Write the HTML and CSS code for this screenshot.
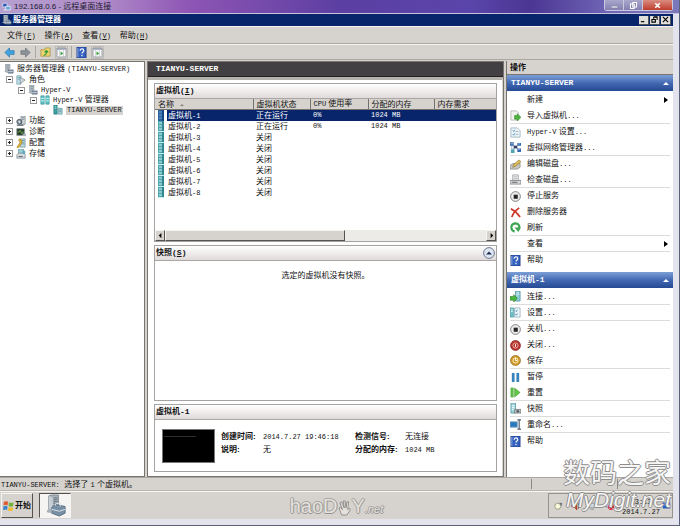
FILE: index.html
```html
<!DOCTYPE html>
<html lang="zh-CN">
<head>
<meta charset="utf-8">
<title>192.168.0.6 - 远程桌面连接</title>
<link rel="stylesheet" href="styles.css">
</head>
<body>
<svg class="defs" aria-hidden="true">
  <symbol id="server" viewBox="0 0 12 12"><path d="M2 0h5v8H2z" fill="#c3ccd3" stroke="#6b7882" stroke-width=".7"/><path d="M3 2h3M3 4h3M3 6h3" stroke="#5e6c78" stroke-width=".7"/><path d="M5 7h6v4H5z" fill="#8497a8" stroke="#4f5f70" stroke-width=".7"/><path d="M7 7V6h2v1M5 9h6" fill="none" stroke="#dfe6ec" stroke-width=".7"/><path d="M0 9l5-2v4z" fill="#a7b2bb"/></symbol>
  <symbol id="roles" viewBox="0 0 12 12"><path d="M1 1h5v10H1z" fill="#bfe3ea" stroke="#52808d" stroke-width=".7"/><path d="M2 3h3M2 5h3" stroke="#4d8fa0" stroke-width=".7"/><path d="M5 3l6 3-6 4z" fill="#d4dce2" stroke="#6f7d8a" stroke-width=".8"/></symbol>
  <symbol id="pair" viewBox="0 0 12 12"><path d="M1 1h4v10H1zM7 1h4v10H7z" fill="#5cc4c4" stroke="#2f8a91" stroke-width=".7"/><path d="M1 4h4M1 7h4M7 4h4M7 7h4" stroke="#d9fafa" stroke-width="1"/></symbol>
  <symbol id="host" viewBox="0 0 12 12"><path d="M1 0h4v11H1z" fill="#3aa3a3" stroke="#1f6d74" stroke-width=".7"/><path d="M2 2h2M2 4h2" stroke="#c6f2f2" stroke-width=".8"/><path d="M6 4h5v7H6z" fill="#a8d9df" stroke="#4b858e" stroke-width=".7"/><path d="M7 6h3M7 8h3" stroke="#4b858e" stroke-width=".8"/></symbol>
  <symbol id="features" viewBox="0 0 12 12"><path d="M6 0h5v10H6z" fill="#ccd3d8" stroke="#6c7780" stroke-width=".7"/><path d="M7 2h3M7 4h3" stroke="#66727c" stroke-width=".7"/><circle cx="4" cy="7" r="3" fill="#8f9ba5" stroke="#3f4c57"/><circle cx="4" cy="7" r="1" fill="#fff"/><path d="M1 11h8" stroke="#4b5863" stroke-width="1.4"/></symbol>
  <symbol id="diag" viewBox="0 0 12 12"><path d="M1 2h9v8H1z" fill="#26352d" stroke="#7d8b84"/><path d="M2 6h2l1-2 2 4 1-2h1" fill="none" stroke="#7fd04f" stroke-width=".9"/><path d="M8 8h4v3H8z" fill="#aab3b9"/></symbol>
  <symbol id="config" viewBox="0 0 12 12"><path d="M5 1h6v10H5z" fill="#b8d7df" stroke="#62828b" stroke-width=".7"/><path d="M6 3h4M6 5h4M6 7h4" stroke="#54818f" stroke-width=".7"/><path d="M1 11l4-6-2-2 1-2 3 2v3l-4 6z" fill="#e4b833" stroke="#95771a" stroke-width=".6"/></symbol>
  <symbol id="storage" viewBox="0 0 12 12"><path d="M3 0h6v7H3z" fill="#9cced5" stroke="#4d858f" stroke-width=".7"/><path d="M1 7l2-2h7l1 2v4H1z" fill="#d4dadd" stroke="#66747e" stroke-width=".7"/><path d="M3 9h5" stroke="#46545f"/><path d="M8 2h3v4H8z" fill="#5fa5bd"/></symbol>
  <symbol id="vm" viewBox="0 0 6 11"><path d="M0 0h6v11H0z" fill="#4fa6ad"/><path d="M4 0h2v11H4z" fill="#348692"/><path d="M1 2h3M1 5h3M1 8h3M0 10.500h6" stroke="#c6f1f1" stroke-width="1"/></symbol>
  <symbol id="vm-on" viewBox="0 0 6 11"><path d="M0 0h6v11H0z" fill="#2b62a0"/><path d="M4 0h2v11H4z" fill="#17437f"/><path d="M1 2h3M1 5h3M1 8h3" stroke="#6fa0cf" stroke-width="1"/></symbol>
  <symbol id="back" viewBox="0 0 12 12"><path d="M1 6l5-5v3h5v4H6v3z" fill="#42a5e2" stroke="#2474ae" stroke-width=".8"/></symbol>
  <symbol id="forward" viewBox="0 0 12 12"><path d="M11 6L6 1v3H1v4h5v3z" fill="#8c9298" stroke="#6d7379" stroke-width=".8"/></symbol>
  <symbol id="folder" viewBox="0 0 12 12"><path d="M1 3h4l1-2h5v9H1z" fill="#f0d574" stroke="#a58c39" stroke-width=".8"/><path d="M4 9c3 0 3-2 3-4M5 6l2-2 2 2" fill="none" stroke="#2b9a32" stroke-width="1.3"/></symbol>
  <symbol id="pane" viewBox="0 0 12 12"><path d="M1 1h10v10H1z" fill="#fafafa" stroke="#858a92"/><path d="M1 2h10" stroke="#9aa4b4" stroke-width="2"/><path d="M4 3v8M8 3v8" stroke="#b4bac2" stroke-width=".7"/><path d="M5 5l3 2-3 2z" fill="#35a23f"/></symbol>
  <symbol id="help" viewBox="0 0 12 12"><path d="M1 0h10v12H1z" fill="#3461bd" stroke="#1c3680" stroke-width=".8"/><path d="M2 1v10" stroke="#8fb0ea"/><path d="M4.500 4c0-2.500 4-2.500 4 0 0 1.500-2 1.500-2 3.200M6.500 8.500v1.500" fill="none" stroke="#fff" stroke-width="1.300"/></symbol>
  <symbol id="import" viewBox="0 0 12 12"><path d="M1 1h6l2 2v8H1z" fill="#f2f3f1" stroke="#a7aba6" stroke-width=".8"/><path d="M5 6h3V4l4 4-4 4v-2H5z" fill="#4db63e" stroke="#2d8424" stroke-width=".6"/></symbol>
  <symbol id="settings" viewBox="0 0 12 12"><path d="M1 1h7l3 3v7H1z" fill="#eef6fa" stroke="#8da6b4" stroke-width=".8"/><path d="M3 4l1 1 1-2M3 8l1 1 1-2" fill="none" stroke="#2e7bb5" stroke-width=".9"/><path d="M6 5h3M6 8h3" stroke="#7f929d" stroke-width=".8"/></symbol>
  <symbol id="network" viewBox="0 0 12 12"><path d="M2 2l8 7M10 2L2 9M2 2v8" stroke="#8097ad" stroke-width=".8"/><path d="M0 0h4v4H0zM8 1h4v3H8zM8 7h4v4H8z" fill="#3469b0"/><path d="M1 1h2v1H1zM9 2h2M9 8h2" stroke="#c4e2ff" stroke-width=".7"/><path d="M1 8h4v4H1z" fill="#51a8b3"/><path d="M4 4h4v3H4z" fill="#333e63"/></symbol>
  <symbol id="edit" viewBox="0 0 12 12"><path d="M0 7l3-2h8v4l-3 2H0z" fill="#c5c8c4" stroke="#7f827d" stroke-width=".8"/><path d="M3 9l1-3 6-5 2 2-6 5z" fill="#dfbd56" stroke="#8c7230" stroke-width=".7"/></symbol>
  <symbol id="inspect" viewBox="0 0 12 12"><path d="M3 1h6v6H3z" fill="#fafafa" stroke="#878a8e" stroke-width=".8"/><path d="M4 3h4M4 5h4" stroke="#999" stroke-width=".8"/><path d="M0 7h12v4H0z" fill="#d7d9da" stroke="#74777b" stroke-width=".8"/><path d="M2 9h6" stroke="#595f64"/></symbol>
  <symbol id="stop" viewBox="0 0 12 12"><circle cx="6" cy="6" r="5.300" fill="#eee" stroke="#777" stroke-width="1"/><path d="M4 4h4.500v4.500H4z" fill="#262626"/></symbol>
  <symbol id="delete" viewBox="0 0 12 12"><path d="M1 2c4 2 7 5 10 9M10 1C6 4 3 7 2 11" fill="none" stroke="#cb3324" stroke-width="1.900"/></symbol>
  <symbol id="refresh" viewBox="0 0 12 12"><path d="M5 10.500C0 9 .5 2 5.500 1.500 10 1.500 11 5 9.500 7.500" fill="none" stroke="#3da551" stroke-width="2.300"/><path d="M5 6l7 0-3 5z" fill="#3da551"/></symbol>
  <symbol id="connect" viewBox="0 0 12 12"><path d="M6 0h5v11H6z" fill="#8cced6" stroke="#4b8e99" stroke-width=".8"/><path d="M7 2h3M7 4h3" stroke="#eef" stroke-width=".9"/><path d="M0 6h4V4l4 4-4 4v-2H0z" fill="#4cb640" stroke="#28751e" stroke-width=".6"/></symbol>
  <symbol id="vmset" viewBox="0 0 12 12"><path d="M5 1h6v10H5z" fill="#eef6fa" stroke="#8da6b4" stroke-width=".8"/><path d="M0 1h4v10H0z" fill="#6fc0c8" stroke="#45909a" stroke-width=".6"/><path d="M1 3h2M1 5h2" stroke="#eaffff"/><path d="M6 4l1 1 1-2M6 8l1 1 1-2" fill="none" stroke="#2e7bb5" stroke-width=".9"/></symbol>
  <symbol id="off" viewBox="0 0 12 12"><circle cx="6" cy="6" r="5.400" fill="#b83431" stroke="#852220" stroke-width=".8"/><circle cx="6" cy="6" r="2.800" fill="none" stroke="#f0b0a4" stroke-width="1"/><path d="M6 4.500v3" stroke="#fff"/></symbol>
  <symbol id="save" viewBox="0 0 12 12"><circle cx="6" cy="6" r="5.400" fill="#d29b2d" stroke="#936717" stroke-width=".8"/><circle cx="6" cy="6" r="2.800" fill="none" stroke="#fff0ba" stroke-width="1"/><path d="M6 3v3h2" fill="none" stroke="#fff"/></symbol>
  <symbol id="pause" viewBox="0 0 12 12"><path d="M2 1h3v10H2zM7 1h3v10H7z" fill="#3684bd"/></symbol>
  <symbol id="reset" viewBox="0 0 12 12"><path d="M1 1h2.500v10H1zM5 1l6 5-6 5z" fill="#63c64b" stroke="#3c9b2b" stroke-width=".6"/></symbol>
  <symbol id="snapshot" viewBox="0 0 12 12"><path d="M1 0h5v11H1z" fill="#9dd4db" stroke="#52939e" stroke-width=".8"/><path d="M2 3h3M2 5h3M2 7h3" stroke="#f5ffff"/><path d="M5 7h7v4H5z" fill="#bec3c6" stroke="#60666a" stroke-width=".7"/><circle cx="8.500" cy="9" r="1.500" fill="#555e65"/></symbol>
  <symbol id="rename" viewBox="0 0 12 12"><path d="M0 3h8v6H0z" fill="#2679be" stroke="#8fa9bd" stroke-width=".9"/><path d="M8 1h4M8 11h4M10 1v10" stroke="#48586c" stroke-width="1.200"/></symbol>
</svg>

<div class="remote">
  <header class="remote-bar">
    <svg class="remote-icon" viewBox="0 0 12 12" aria-hidden="true"><path d="M1 1h6v5H1z" fill="#315bb0" stroke="#dce6f7"/><path d="M5 5h6v5H5z" fill="#69a5d7" stroke="#edf3fb"/><path d="M2 10h3" stroke="#fff"/></svg>
    <h1 class="remote-title">192.168.0.6 - 远程桌面连接</h1>
    <div class="remote-controls">
      <button aria-label="最小化"><svg viewBox="0 0 12 12"><path d="M2 7h8v2H2z" fill="#fff" stroke="#777b9b" stroke-width=".5"/></svg></button>
      <button aria-label="还原"><svg viewBox="0 0 12 12"><path d="M5 2h5v6H5zM2 4h5v6H2z" fill="#8682ae" stroke="#fff" stroke-width="1.400"/></svg></button>
      <button class="remote-close" aria-label="关闭"><svg viewBox="0 0 12 12"><path d="M3 3l6 6M9 3L3 9" stroke="#fff" stroke-width="2.200"/></svg></button>
    </div>
  </header>

  <div class="desktop">
    <div class="app-bar">
      <svg class="icon" aria-hidden="true"><use href="#server"/></svg>
      <h2 class="app-title">服务器管理器</h2>
      <div class="app-controls">
        <button aria-label="最小化"><svg viewBox="0 0 8 8"><path d="M1 6.500h4" stroke="#000" stroke-width="1.300"/></svg></button>
        <button aria-label="还原"><svg viewBox="0 0 8 8"><path d="M3 1h4v3.500M1 4h4v3H1zM3 1v2M1 4h4M3 1.500h4" fill="none" stroke="#000" stroke-width="1.200"/></svg></button>
        <button aria-label="关闭"><svg viewBox="0 0 8 8"><path d="M1 1l6 6M7 1L1 7" stroke="#000" stroke-width="1.300"/></svg></button>
      </div>
    </div>

    <nav class="menu" aria-label="菜单">
      <button>文件<span class="en">(<u>F</u>)</span></button>
      <button>操作<span class="en">(<u>A</u>)</span></button>
      <button>查看<span class="en">(<u>V</u>)</span></button>
      <button>帮助<span class="en">(<u>H</u>)</span></button>
    </nav>

    <div class="toolbar" role="toolbar" aria-label="工具栏">
      <button aria-label="后退"><svg><use href="#back"/></svg></button>
      <button aria-label="前进"><svg><use href="#forward"/></svg></button>
      <span class="divider"></span>
      <button aria-label="向上"><svg><use href="#folder"/></svg></button>
      <button class="pressed" aria-label="显示控制台树"><svg><use href="#pane"/></svg></button>
      <span class="divider"></span>
      <button aria-label="帮助"><svg><use href="#help"/></svg></button>
      <button class="pressed" aria-label="显示操作窗格"><svg><use href="#pane"/></svg></button>
    </div>

    <main class="workspace">
      <nav class="tree" aria-label="控制台树">
        <div class="root"><svg class="icon"><use href="#server"/></svg><a href="#">服务器管理器 <span class="en">(TIANYU-SERVER)</span></a></div>
        <ul>
          <li>
            <div class="node top"><button class="twisty" aria-label="折叠"></button><svg class="icon"><use href="#roles"/></svg><a href="#">角色</a></div>
            <ul>
              <li>
                <div class="node"><button class="twisty" aria-label="折叠"></button><svg class="icon"><use href="#server"/></svg><a href="#" class="en">Hyper-V</a></div>
                <ul>
                  <li>
                    <div class="node"><button class="twisty" aria-label="折叠"></button><svg class="icon"><use href="#pair"/></svg><a href="#"><span class="en">Hyper-V</span> 管理器</a></div>
                    <ul>
                      <li><div class="node leaf"><svg class="icon"><use href="#host"/></svg><a href="#" class="en current">TIANYU-SERVER</a></div></li>
                    </ul>
                  </li>
                </ul>
              </li>
            </ul>
          </li>
          <li><div class="node top"><button class="twisty closed" aria-label="展开"></button><svg class="icon"><use href="#features"/></svg><a href="#">功能</a></div></li>
          <li><div class="node top"><button class="twisty closed" aria-label="展开"></button><svg class="icon"><use href="#diag"/></svg><a href="#">诊断</a></div></li>
          <li><div class="node top"><button class="twisty closed" aria-label="展开"></button><svg class="icon"><use href="#config"/></svg><a href="#">配置</a></div></li>
          <li><div class="node top"><button class="twisty closed" aria-label="展开"></button><svg class="icon"><use href="#storage"/></svg><a href="#">存储</a></div></li>
        </ul>
      </nav>

      <div class="center">
        <h2 class="center-title">TIANYU-SERVER</h2>
        <div class="panels">
          <section class="panel machines">
            <h3 class="panel-title">虚拟机<span class="mono">(<u>I</u>)</span></h3>
            <table>
              <colgroup><col class="c-icon"><col class="c-name"><col class="c-state"><col class="c-cpu"><col class="c-mem"><col></colgroup>
              <thead><tr><th colspan="2">名称<span class="sort"></span></th><th>虚拟机状态</th><th><span class="en">CPU</span> 使用率</th><th>分配的内存</th><th>内存需求</th></tr></thead>
              <tbody>
                <tr class="selected"><td class="ico"><svg><use href="#vm-on"/></svg></td><td>虚拟机<span class="en">-1</span></td><td>正在运行</td><td class="en">0%</td><td class="en">1024 MB</td><td></td></tr>
                <tr><td class="ico"><svg><use href="#vm"/></svg></td><td>虚拟机<span class="en">-2</span></td><td>正在运行</td><td class="en">0%</td><td class="en">1024 MB</td><td></td></tr>
                <tr><td class="ico"><svg><use href="#vm"/></svg></td><td>虚拟机<span class="en">-3</span></td><td>关闭</td><td></td><td></td><td></td></tr>
                <tr><td class="ico"><svg><use href="#vm"/></svg></td><td>虚拟机<span class="en">-4</span></td><td>关闭</td><td></td><td></td><td></td></tr>
                <tr><td class="ico"><svg><use href="#vm"/></svg></td><td>虚拟机<span class="en">-5</span></td><td>关闭</td><td></td><td></td><td></td></tr>
                <tr><td class="ico"><svg><use href="#vm"/></svg></td><td>虚拟机<span class="en">-6</span></td><td>关闭</td><td></td><td></td><td></td></tr>
                <tr><td class="ico"><svg><use href="#vm"/></svg></td><td>虚拟机<span class="en">-7</span></td><td>关闭</td><td></td><td></td><td></td></tr>
                <tr><td class="ico"><svg><use href="#vm"/></svg></td><td>虚拟机<span class="en">-8</span></td><td>关闭</td><td></td><td></td><td></td></tr>
              </tbody>
            </table>
            <div class="scrollbar">
              <button aria-label="向左滚动"><svg viewBox="0 0 8 8"><path d="M5 1v6L2 4z"/></svg></button>
              <div class="track"><div class="thumb"></div></div>
              <button aria-label="向右滚动"><svg viewBox="0 0 8 8"><path d="M3 1v6l3-3z"/></svg></button>
            </div>
          </section>

          <section class="panel snapshots">
            <h3 class="panel-title">快照<span class="mono">(<u>S</u>)</span><button class="collapse" aria-label="折叠快照"><svg viewBox="0 0 12 12"><circle cx="6" cy="6" r="5.400" fill="#dfe6f1" stroke="#6c7891"/><path d="M3 7.500l3-3 3 3z" fill="#1f2f55"/></svg></button></h3>
            <p>选定的虚拟机没有快照。</p>
          </section>

          <section class="panel details">
            <h3 class="panel-title">虚拟机<span class="mono">-1</span></h3>
            <div class="details-body">
              <div class="preview"></div>
              <dl>
                <dt>创建时间:</dt><dd class="en">2014.7.27 19:46:18</dd>
                <dt>说明:</dt><dd>无</dd>
              </dl>
              <dl class="wide">
                <dt>检测信号:</dt><dd>无连接</dd>
                <dt>分配的内存:</dt><dd class="en">1024 MB</dd>
              </dl>
            </div>
          </section>
        </div>
      </div>

      <aside class="actions">
        <h2 class="actions-title">操作</h2>
        <h3 class="group-title"><span class="mono">TIANYU-SERVER</span><span class="up"></span></h3>
        <ul>
          <li><button><span class="blank"></span>新建<span class="more"></span></button></li>
          <li class="rule"><button><svg><use href="#import"/></svg>导入虚拟机<span class="en">...</span></button></li>
          <li><button><svg><use href="#settings"/></svg><span class="en">Hyper-V</span>&nbsp;设置<span class="en">...</span></button></li>
          <li class="rule"><button><svg><use href="#network"/></svg>虚拟网络管理器<span class="en">...</span></button></li>
          <li><button><svg><use href="#edit"/></svg>编辑磁盘<span class="en">...</span></button></li>
          <li class="rule"><button><svg><use href="#inspect"/></svg>检查磁盘<span class="en">...</span></button></li>
          <li><button><svg><use href="#stop"/></svg>停止服务</button></li>
          <li><button><svg><use href="#delete"/></svg>删除服务器</button></li>
          <li class="rule"><button><svg><use href="#refresh"/></svg>刷新</button></li>
          <li class="rule"><button><span class="blank"></span>查看<span class="more"></span></button></li>
          <li><button><svg><use href="#help"/></svg>帮助</button></li>
        </ul>
        <h3 class="group-title">虚拟机<span class="mono">-1</span><span class="up"></span></h3>
        <ul>
          <li class="rule"><button><svg><use href="#connect"/></svg>连接<span class="en">...</span></button></li>
          <li class="rule"><button><svg><use href="#vmset"/></svg>设置<span class="en">...</span></button></li>
          <li><button><svg><use href="#stop"/></svg>关机<span class="en">...</span></button></li>
          <li><button><svg><use href="#off"/></svg>关闭<span class="en">...</span></button></li>
          <li class="rule"><button><svg><use href="#save"/></svg>保存</button></li>
          <li><button><svg><use href="#pause"/></svg>暂停</button></li>
          <li class="rule"><button><svg><use href="#reset"/></svg>重置</button></li>
          <li class="rule"><button><svg><use href="#snapshot"/></svg>快照</button></li>
          <li class="rule"><button><svg><use href="#rename"/></svg>重命名<span class="en">...</span></button></li>
          <li><button><svg><use href="#help"/></svg>帮助</button></li>
        </ul>
      </aside>
    </main>

    <div class="status"><span class="status-text"><span class="en">TIANYU-SERVER:</span>&nbsp; 选择了 <span class="en">1</span> 个虚拟机。</span><span class="status-cell"></span><span class="status-cell end"></span></div>

    <footer class="taskbar">
      <button class="start"><svg viewBox="0 0 12 12" aria-hidden="true"><path d="M1 2c2-1 3-1 4.500 0L5 6C3.500 5 2 5 .5 6z" fill="#e4572b"/><path d="M6.500 2.500c1.500 1 3 1 5 0L11 6.500c-2 1-3.500 1-5 0z" fill="#71b13c"/><path d="M.5 7c1.500-1 3-1 4.500 0l-.5 4C3 10 1.500 10 0 11z" fill="#3b83c9"/><path d="M6 7.500c1.500 1 3 1 5 0l-.5 4c-2 1-3.500 1-5 0z" fill="#f1bb2e"/></svg>开始</button>
      <button class="task" aria-label="服务器管理器"><svg viewBox="0 0 24 24"><path d="M5 2l3-1h7v15H5z" fill="#a9b4bd" stroke="#7c8892"/><path d="M5 2l4 2v13l-4-2z" fill="#c9d0d5"/><path d="M10 4h4M10 6h4M10 8h4M10 10h4" stroke="#5f6d79"/><path d="M8 14l4-3 10 2v7l-6 3-8-3z" fill="#7890a5" stroke="#5c7185"/><path d="M8 16l8 2 6-2M12 12v-2h5v3" fill="none" stroke="#dce5ec"/><path d="M3 17l5-2v5l-5-1z" fill="#a8b0b7"/></svg></button>
      <div class="tray">
        <svg class="tray-icon" viewBox="0 0 12 12"><circle cx="5" cy="7" r="4" fill="#fafadd" stroke="#87866d"/><path d="M7 2l4 1-1 4" fill="#6a7178"/></svg>
        <svg class="tray-icon" viewBox="0 0 12 12"><path d="M1 5h3l4-4v11L4 8H1z" fill="#d5472e" stroke="#7f2417" stroke-width=".6"/><path d="M10 3v7" stroke="#4b2020"/></svg>
        <svg class="tray-icon" viewBox="0 0 12 12"><path d="M1 3h8v6H1zM3 11h5" fill="#d4d8df" stroke="#7f858f"/></svg>
        <svg class="tray-icon" viewBox="0 0 12 12"><path d="M1 1h8v7H1z" fill="#c1cbd6" stroke="#70798a"/><circle cx="8" cy="8" r="4" fill="#d7283a"/><path d="M6 6l4 4M10 6l-4 4" stroke="#fff" stroke-width="1.200"/></svg>
        <time class="clock en"><span>13:13</span><span>2014.7.27</span></time>
        <svg class="tray-icon" viewBox="0 0 12 12"><path d="M1 2h10v8H1z" fill="#255fc6"/><path d="M4 2v4h7" fill="none" stroke="#a9cbff"/></svg>
        <div class="site-mark"><span class="site-cn">数码之家</span><span class="site-url">MyDigit.net</span></div>
      </div>
      <div class="brand-mark">haoD<svg viewBox="0 0 16 18" aria-hidden="true"><path d="M5 17L2 9l2-1 2 3-3-8 2-1 3 7-1-8h2l1 8 1-7h2l-1 9 2-2 1 2-4 6z" fill="#e4e1dd" stroke="#898785"/></svg>Y<small>.net</small></div>
    </footer>
  </div>
</div>
</body>
</html>
```
FILE: styles.css
```css
* { box-sizing: border-box; }

body {
  margin: 0;
  font: 8px/10px "Liberation Sans", "Noto Sans CJK SC", sans-serif;
  color: #111;
}

h1, h2, h3, p, ul, dl, dd { margin: 0; padding: 0; font-size: 8px; }
ul { list-style: none; }
button {
  margin: 0;
  padding: 0;
  border: 0;
  background: none;
  font: inherit;
  color: inherit;
}
a { color: inherit; text-decoration: none; }
svg { display: block; flex: none; }
.defs { position: absolute; width: 0; height: 0; }
.icon { width: 10px; height: 10px; }
.en { font-family: "Liberation Mono", monospace; font-size: 7px; }
.mono { font-family: "Liberation Mono", monospace; font-size: 8px; }

/* Remote session window */
.remote {
  display: flex;
  flex-direction: column;
  min-height: 100vh;
  padding: 0 6px 6px 0;
  background: #e3e3ee;
  border-right: 1px solid #59627a;
  border-bottom: 1px solid #5b6274;
}
.remote-bar {
  display: flex;
  align-items: center;
  gap: 3px;
  height: 14px;
  margin-right: -6px;
  padding: 0 6px 0 2px;
  background: linear-gradient(90deg, #b5a0cf 0, #b08dc9 100px, #8e55b4 190px, #5c3fa2 340px, #5a45aa 470px, #4b3693 530px, #6b60b2 600px, #7b79bb);
  border-bottom: 1px solid #c7c3df;
}
.remote-icon { width: 9px; height: 10px; }
.remote-title { font-size: 8px; font-weight: 400; line-height: 13px; color: #1e1830; }
.remote-controls {
  display: flex;
  align-self: flex-start;
  margin-left: auto;
  border: 1px solid #c9c9df;
  border-top: 0;
  border-radius: 0 0 3px 3px;
}
.remote-controls button {
  display: grid;
  place-items: center;
  width: 19px;
  height: 10px;
  background: linear-gradient(#aaa6cc, #8380b2);
  border-right: 1px solid #c9c9df;
}
.remote-controls .remote-close { width: 29px; border: 0; background: linear-gradient(#db8c81, #bd3d2d); }
.remote-controls svg { width: 9px; height: 9px; }

.desktop { display: flex; flex: 1; flex-direction: column; background: #d6d3ce; }

/* Application chrome */
.app-bar {
  display: flex;
  align-items: center;
  gap: 1px;
  height: 12px;
  padding: 0 2px;
  background: #08246b;
  color: #fff;
}
.app-controls { display: flex; margin-left: auto; gap: 1px; }
.app-controls button {
  display: grid;
  place-items: center;
  width: 10px;
  height: 9px;
  background: #e1dfda;
  border-right: 1px solid #555;
  border-bottom: 1px solid #555;
}
.app-controls svg { width: 7px; height: 7px; }
.menu {
  display: flex;
  gap: 9px;
  height: 18px;
  padding: 2px 7px 0;
  border-top: 1px solid #f6f5f2;
  border-bottom: 1px solid #aaa7a3;
}
.menu button { display: flex; align-items: center; }
.toolbar {
  display: flex;
  align-items: center;
  gap: 3px;
  height: 16px;
  padding: 0 3px;
  border-top: 1px solid #f6f5f2;
  border-bottom: 1px solid #aaa7a3;
}
.toolbar button { display: grid; place-items: center; width: 13px; height: 13px; }
.toolbar svg { width: 11px; height: 11px; }
.toolbar .pressed { background: #eceae7; border: 1px solid #bdbab5; }
.divider { width: 1px; height: 12px; background: #aaa7a3; }

.workspace {
  display: grid;
  flex: 1;
  grid-template-columns: 145px minmax(0, 1fr) 167px;
  gap: 2px;
  padding-top: 1px;
}

/* Console tree */
.tree { padding: 2px 4px; background: #fff; border: 1px solid #77736f; border-left: 0; white-space: nowrap; }
.root, .node { display: flex; align-items: center; gap: 3px; height: 10px; }
.tree > ul { padding-left: 2px; }
.tree ul ul { padding-left: 12px; }
.node.top { height: 11px; }
.node.leaf { padding-left: 11px; }
.twisty {
  width: 7px;
  height: 7px;
  background: linear-gradient(#222, #222) center / 3px 1px no-repeat, #fff;
  border: 1px solid #999;
}
.twisty.closed { background: linear-gradient(#222, #222) center / 3px 1px no-repeat, linear-gradient(#222, #222) center / 1px 3px no-repeat, #fff; }
.current { padding: 0 1px; background: #d6d3ce; line-height: 9px; }

/* Centre column */
.center { display: flex; flex-direction: column; background: #fff; border: 1px solid #77736f; }
.center-title {
  height: 15px;
  padding-left: 8px;
  background: #424042;
  border-bottom: 1px solid #222;
  color: #fff;
  font-family: "Liberation Mono", monospace;
  line-height: 14px;
}
.panels {
  display: flex;
  flex: 1;
  flex-direction: column;
  gap: 3px;
  padding: 3px 5px 4px 6px;
  border-top: 3px solid #b5b2ae;
  border-right: 1px solid #d6d3ce;
}
.panel { border: 1px solid #a5a2a2; }
.panel-title {
  display: flex;
  align-items: center;
  height: 15px;
  padding: 0 1px;
  background: linear-gradient(#fff, #e0dada);
  border-bottom: 1px solid #aaa6a4;
}
.machines { display: flex; flex-direction: column; height: 159px; }
table { width: 100%; border-collapse: collapse; table-layout: fixed; }
.c-icon { width: 12px; }
.c-name { width: 86px; }
.c-state { width: 57px; }
.c-cpu { width: 58px; }
.c-mem { width: 66px; }
th {
  height: 10px;
  padding: 0 3px;
  background: #d6d3ce;
  border-right: 1px solid #77736f;
  border-bottom: 1px solid #77736f;
  font-weight: 400;
  line-height: 9px;
  text-align: left;
  white-space: nowrap;
}
th:last-child { border-right: 0; }
.sort { display: inline-block; margin-left: 6px; border: 2px solid transparent; border-bottom-color: #85827d; vertical-align: 1px; }
td { height: 11px; padding: 0 0 0 3px; line-height: 9px; white-space: nowrap; }
td:nth-child(2) { padding-left: 1px; }
td.ico { padding: 0 0 0 3px; }
td svg { width: 6px; height: 11px; }
.selected td { background: #08246b; color: #fff; }
.selected td.ico { background: #fff; }
.scrollbar { display: flex; height: 11px; margin-top: auto; background: #edebe8; }
.scrollbar button, .thumb {
  background: #d6d3ce;
  border: 1px solid #f7f5f2;
  border-right-color: #55524f;
  border-bottom-color: #55524f;
}
.scrollbar button { display: grid; place-items: center; width: 10px; }
.scrollbar svg { width: 7px; height: 7px; }
.track { display: flex; flex: 1; }
.thumb { width: 56%; }
.snapshots { flex: 1; }
.snapshots p { padding-top: 10px; text-align: center; }
.collapse { margin-left: auto; }
.collapse svg { width: 12px; height: 12px; }
.details { height: 68px; }
.details-body { display: flex; align-items: flex-start; gap: 6px; padding: 9px 7px; white-space: nowrap; }
.preview { width: 53px; height: 34px; background: linear-gradient(#303030, #303030) 1px 6px / 32px 1px no-repeat, #000; border: 1px solid #777; }
dl { display: grid; grid-template-columns: 42px 86px; grid-auto-rows: 13px; padding-top: 3px; }
dl.wide { grid-template-columns: 50px auto; }
dt { font-weight: 700; }

/* Actions */
.actions { background: #fff; border-left: 1px solid #77736f; white-space: nowrap; }
.actions-title { height: 14px; padding: 0 3px; background: #d6d3ce; border-bottom: 1px solid #77736f; line-height: 13px; }
.group-title {
  display: flex;
  align-items: center;
  height: 16px;
  padding: 0 4px;
  background: linear-gradient(#7d9fd7, #4369b3 50%, #264a94);
  color: #fff;
}
.actions ul { padding-top: 1px; }
.actions ul + .group-title { margin-top: 4px; }
.up { margin-left: auto; border: 3px solid transparent; border-top: 0; border-bottom-color: #fff; }
.actions li { height: 16px; margin: 0 3px; }
.actions .rule { border-bottom: 1px solid #dcdcdc; }
.actions li button { display: flex; align-items: center; width: 100%; height: 100%; text-align: left; }
.actions li svg, .blank { width: 11px; height: 11px; margin-right: 6px; }
.more { margin: 0 2px 0 auto; border: 3px solid transparent; border-right: 0; border-left: 4px solid #000; }

/* Status bar and taskbar */
.status { display: flex; height: 14px; padding: 1px 0; border-top: 1px solid #aaa7a3; border-bottom: 1px solid #bab7b2; line-height: 12px; }
.status-text { flex: 1; padding-left: 1px; }
.status-cell { width: 86px; border-left: 1px solid #8c8985; }
.status-cell.end { width: 56px; }
.taskbar { position: relative; display: flex; align-items: center; gap: 6px; height: 28px; padding-left: 1px; border-top: 1px solid #f6f5f2; }
.start, .task { display: flex; align-items: center; justify-content: center; width: 32px; height: 25px; border: 1px solid #f7f5f2; border-right-color: #55524f; border-bottom-color: #55524f; }
.start { gap: 1px; font-weight: 700; }
.start svg { width: 11px; height: 11px; }
.task { background: #f5f4f2; border-color: #55524f #f7f5f2 #f7f5f2 #55524f; }
.task svg { width: 23px; height: 23px; }
.tray { position: relative; display: flex; align-items: center; gap: 8px; height: 25px; margin-left: auto; padding: 0 1px 0 5px; border: 1px solid #96938f; }
.tray-icon { width: 9px; height: 9px; }
.clock { display: grid; width: 38px; margin-right: -6px; padding-top: 3px; line-height: 10px; text-align: center; }

/* Overlaid site marks */
.site-mark {
  position: absolute;
  right: 1px;
  bottom: 7px;
  display: grid;
  justify-items: end;
  color: #f6f5f4;
  text-shadow: 1px 0 #8d8d8d, -1px 0 #8d8d8d, 0 1px #8d8d8d, 0 -1px #8d8d8d;
  white-space: nowrap;
}
.site-cn { font-size: 27px; line-height: 29px; }
.site-url { font-size: 21px; font-style: italic; line-height: 21px; }
.brand-mark {
  position: absolute;
  left: 50%;
  bottom: 0;
  display: flex;
  align-items: baseline;
  transform: translateX(-50%);
  color: #e4e1dd;
  font-size: 20px;
  line-height: 20px;
  text-shadow: 1px 0 #949290, -1px 0 #a9a6a3, 0 1px #949290, 0 -1px #a9a6a3;
}
.brand-mark svg { align-self: center; width: 14px; height: 16px; }
.brand-mark small { font-size: 11px; font-style: italic; }
```
